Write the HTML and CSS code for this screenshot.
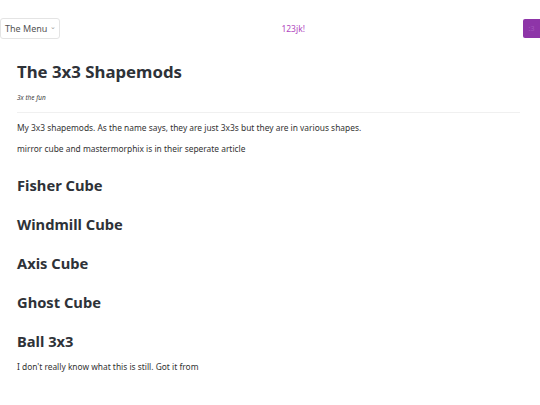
FILE: index.html
```html
<!DOCTYPE html>
<html>
<head>
<meta charset="utf-8">
<link rel="stylesheet" href="styles.css">
</head>
<body>
<header class="topbar">
  <button class="menu-btn"><span class="menu-label">The Menu</span><span class="chev">&#8964;</span></button>
  <div class="brand">123jk!</div>
  <div class="avatar">:3</div>
</header>
<main class="content">
  <h1 class="title">The 3x3 Shapemods</h1>
  <p class="subtitle">3x the fun</p>
  <hr class="rule">
  <p class="text">My 3x3 shapemods. As the name says, they are just 3x3s but they are in various shapes.</p>
  <p class="text">mirror cube and mastermorphix is in their seperate article</p>
  <h2 class="section">Fisher Cube</h2>
  <h2 class="section">Windmill Cube</h2>
  <h2 class="section">Axis Cube</h2>
  <h2 class="section">Ghost Cube</h2>
  <h2 class="section">Ball 3x3</h2>
  <p class="small">I don't really know what this is still. Got it from</p>
</main>
</body>
</html>
```
FILE: styles.css
```css
html, body {
  margin: 0;
  padding: 0;
  background: #ffffff;
  font-family: "Noto Sans", "Open Sans", sans-serif;
  color: #333840;
}
.topbar {
  display: flex;
  align-items: center;
  justify-content: space-between;
  height: 56px;
}
.menu-btn {
  font-family: "Noto Sans", "Open Sans", sans-serif;
  font-size: 9px;
  color: #555;
  background: #fff;
  border: 1px solid #e4e4e4;
  border-radius: 3px;
  height: 21px;
  padding: 0 3px 0 4px;
  display: flex;
  align-items: center;
  gap: 3px;
  white-space: nowrap;
}
.menu-label {
  line-height: 1;
}
.chev {
  font-size: 7px;
  color: #999;
  line-height: 1;
  margin-top: -3px;
}
.brand {
  font-size: 8.5px;
  color: #b048c0;
  margin-left: 3px;
}
.avatar {
  width: 17px;
  height: 19px;
  background: #8e35a8;
  border-radius: 2px 0 0 2px;
  color: #a557bd;
  font-size: 7px;
  display: flex;
  align-items: center;
  justify-content: center;
}
.content {
  padding: 0 20px 0 17px;
}
.title {
  font-size: 16.8px;
  font-weight: 700;
  margin: 5px 0 0;
  line-height: 22px;
  color: #2e3238;
}
.subtitle {
  font-size: 6.5px;
  font-style: italic;
  margin: 10px 0 0;
  color: #444;
}
.rule {
  border: 0;
  border-top: 1px solid #f0f0f0;
  margin: 10px 0 0;
}
.text {
  font-size: 8.4px;
  margin: 9px 0 0;
  line-height: 12px;
  color: #333;
}
.rule + .text {
  margin-top: 9px;
}
.section {
  font-size: 14.7px;
  font-weight: 700;
  margin: 19px 0 0;
  line-height: 20px;
  color: #2e3238;
}
.text + .section {
  margin-top: 20px;
}
.small {
  font-size: 8.4px;
  margin: 10px 0 0;
  line-height: 12px;
  color: #333;
}
```
